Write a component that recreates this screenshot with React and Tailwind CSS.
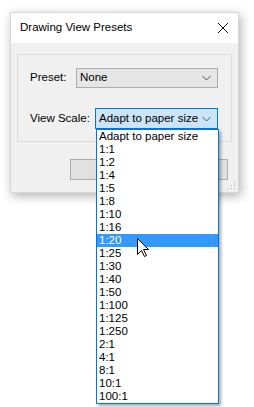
const SCALES = [
    "Adapt to paper size", "1:1", "1:2", "1:4", "1:5", "1:8", "1:10", "1:16", "1:20", "1:25",
    "1:30", "1:40", "1:50", "1:100", "1:125", "1:250", "2:1", "4:1", "8:1", "10:1", "100:1"
]

function Chevron() {
    return (
        <svg width="9" height="5" viewBox="0 0 9 5" className="absolute right-[6px] top-1/2 -translate-y-1/2">
            <path d="M0.5 0.5 L4.5 4.5 L8.5 0.5" fill="none" stroke="#555" strokeWidth="1" />
        </svg>
    )
}

export default function App() {
    return (
        <div
            className="relative w-[254px] h-[407px] bg-white pt-[12px] pl-[10px] text-[11.5px] text-black"
            style={{ fontFamily: '"Liberation Sans", Arial, sans-serif' }}
        >
            {/* dialog */}
            <div className="w-[229px] h-[181px] flex flex-col bg-[#f0f0f0] border border-[#d6d6d6] shadow-[2px_3px_10px_rgba(0,0,0,0.3)]">
                <div className="h-[30px] bg-white flex items-center justify-between pl-[9px] pr-[10px]">
                    <span>Drawing View Presets</span>
                    <svg width="10" height="10" viewBox="0 0 10 10">
                        <path d="M0 0 L10 10 M10 0 L0 10" stroke="#111" strokeWidth="1" />
                    </svg>
                </div>

                <div className="flex-1 relative pt-[11px] px-[6px]">
                    {/* group */}
                    <div className="h-[88px] border border-[#dcdcdc] pl-[12px] pr-[13px] pt-[13px]">
                        <div className="flex items-center justify-between h-[20px]">
                            <span>Preset:</span>
                            <div className="relative w-[142px] h-[20px] bg-[#e5e5e5] border border-[#adadad] flex items-center pl-[3px]">
                                None
                                <Chevron />
                            </div>
                        </div>
                        <div className="flex items-center justify-between h-[21px] mt-[20px]">
                            <span>View Scale:</span>
                            <div className="relative w-[123px] h-[21px] bg-[#cce4f7] border border-[#0078d7] flex items-center pl-[3px]">
                                Adapt to paper size
                                <Chevron />
                            </div>
                        </div>
                    </div>

                    {/* buttons, mostly covered by the open list */}
                    <div className="flex gap-[8px] ml-[53px] mt-[17px]">
                        <div className="w-[75px] h-[21px] bg-[#e1e1e1] border border-[#adadad]" />
                        <div className="w-[75px] h-[21px] bg-[#e1e1e1] border border-[#adadad]" />
                    </div>

                    {/* grip */}
                    <svg width="8" height="8" viewBox="0 0 8 8" className="absolute right-[2px] bottom-[2px]">
                        <rect x="6" y="0" width="1" height="1" fill="#aaa" />
                        <rect x="3" y="3" width="1" height="1" fill="#aaa" />
                        <rect x="6" y="3" width="1" height="1" fill="#aaa" />
                        <rect x="0" y="6" width="1" height="1" fill="#aaa" />
                        <rect x="3" y="6" width="1" height="1" fill="#aaa" />
                        <rect x="6" y="6" width="1" height="1" fill="#aaa" />
                    </svg>
                </div>
            </div>

            {/* dropdown list */}
            <div className="absolute left-[96px] top-[129px] w-[123px] bg-white border border-[#0078d7] shadow-[2px_2px_3px_rgba(0,0,0,0.35)]">
                {SCALES.map(s => (
                    <div
                        key={s}
                        className={`h-[13px] leading-[13px] pl-[2px] ${s === "1:20" ? "bg-[#3399ff] text-white" : ""}`}
                    >
                        {s}
                    </div>
                ))}
            </div>

            {/* cursor */}
            <svg width="13" height="20" viewBox="0 0 13 20" className="absolute left-[137px] top-[238px]">
                <path d="M0.5 0.5 L0.5 16.5 L4.5 12.5 L7.5 18.5 L9.5 17.5 L6.5 11.5 L11.5 11.5 Z" fill="#fff" stroke="#000" strokeWidth="1" />
            </svg>
        </div>
    )
}
